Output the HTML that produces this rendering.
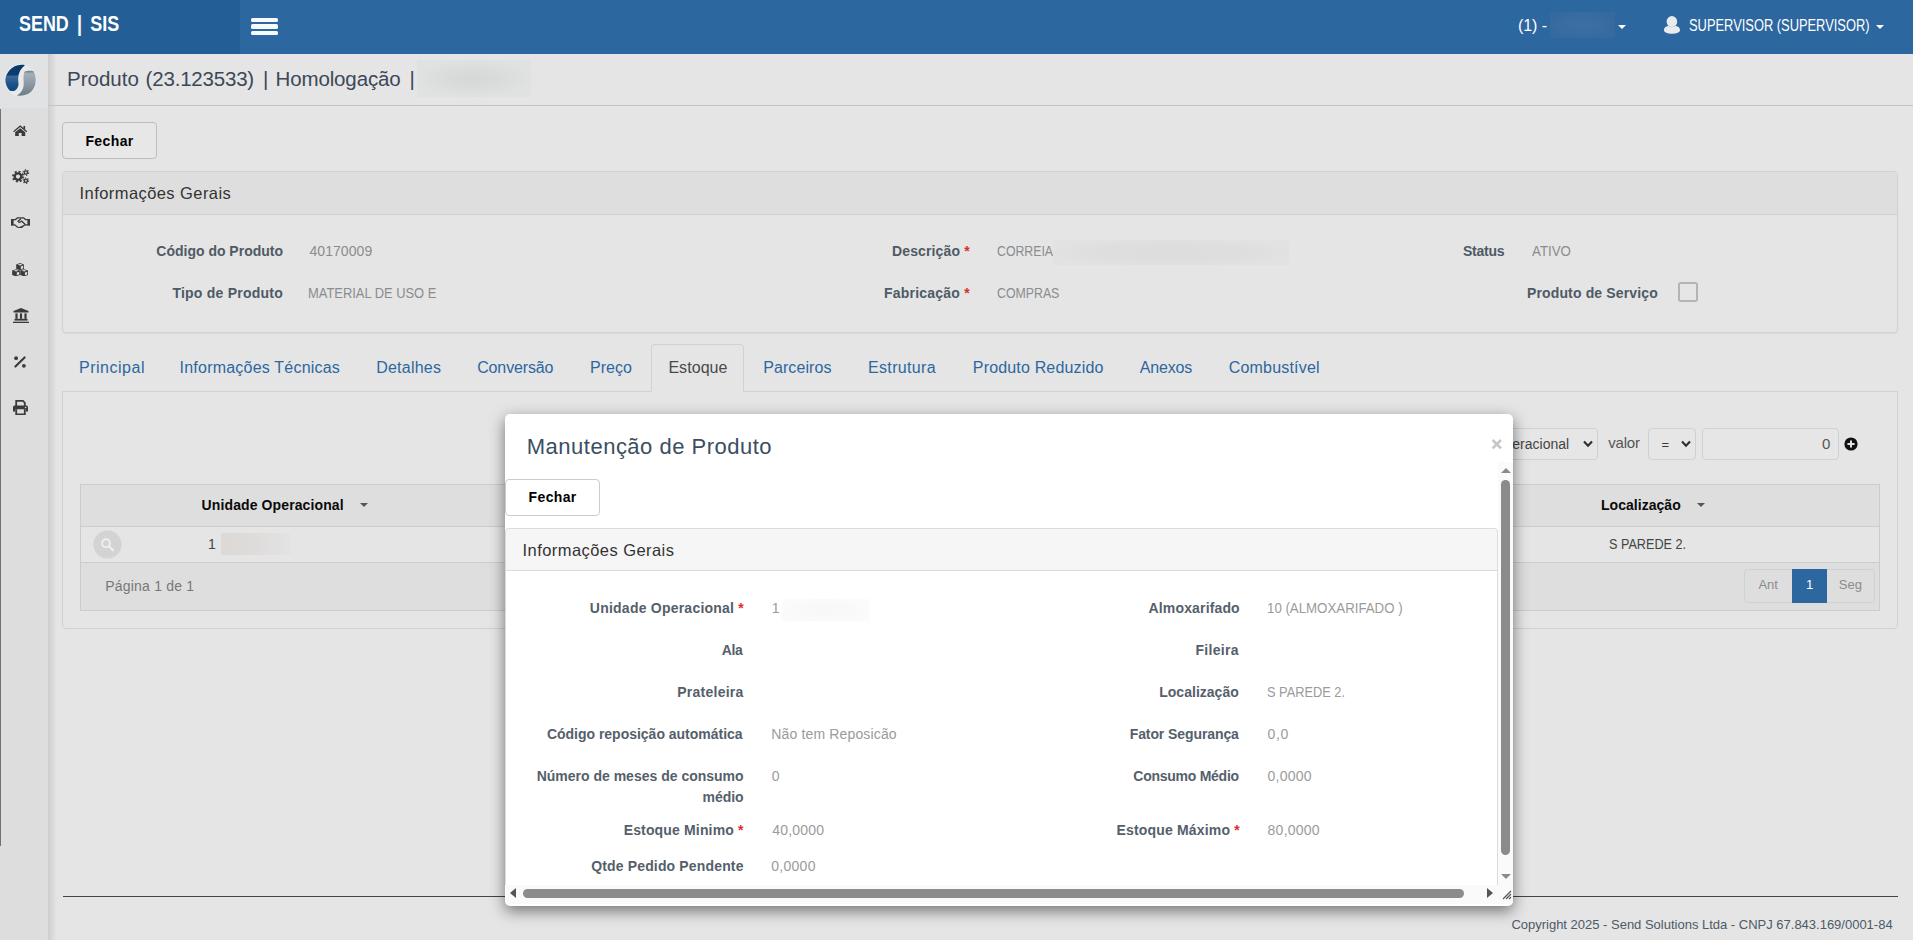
<!DOCTYPE html>
<html lang="pt-BR">
<head>
<meta charset="utf-8">
<title>Produto</title>
<style>
*{box-sizing:border-box;margin:0;padding:0}
html,body{width:1913px;height:940px;overflow:hidden;background:#e5e5e5}
body{position:relative;font-family:"Liberation Sans",sans-serif;font-size:14px;color:#333}
.a{position:absolute}
.t{position:absolute;white-space:nowrap;line-height:20px;height:20px}
.r{text-align:right}
.b{font-weight:bold}
/* header */
#hdr{left:0;top:0;width:1913px;height:54px;background:#2d679f}
#brand{left:0;top:0;width:240px;height:54px;background:#235e96}
.w{color:#fff}
/* sidebar */
#side{left:0;top:54px;width:48px;height:886px;background:#dcdee0}
#sidein{left:0;top:108px;width:42px;height:832px;background:#dddddd}
#sidebar-line{left:0;top:109px;width:1px;height:737px;background:#727272}
#sideshadow{left:48px;top:54px;width:9px;height:886px;background:linear-gradient(to right,rgba(0,0,0,.10),rgba(0,0,0,0))}
/* title */
#titleline{left:48px;top:105px;width:1865px;height:1px;background:#c3c3c3}
.lbl{font-weight:bold;color:#4f5a65;text-align:right}
.val{color:#8a8c8e}.mval{color:#999b9d}.mlbl{color:#55606b}
.red{color:#d9302c}
.btn{border:1px solid #bdbdbd;border-radius:4px}
.panel{border:1px solid #cdd2d4;border-radius:4px}
.tab{color:#2d679f;font-size:16px}
</style>
</head>
<body>
<!-- HEADER -->
<div class="a" id="hdr"></div>
<div class="a" id="brand"></div>
<div class="t w b" id="t-brand" style="transform-origin:0 50%;transform:scaleX(0.8141);word-spacing:4px;left:19.00px;top:12px;font-size:22px;line-height:24px;height:24px">SEND | SIS</div>
<div class="a" style="left:251px;top:17.7px;width:27px;height:4.6px;background:#f7f9fb;border-radius:1.5px"></div>
<div class="a" style="left:251px;top:24.2px;width:27px;height:4.6px;background:#f7f9fb;border-radius:1.5px"></div>
<div class="a" style="left:251px;top:30.7px;width:27px;height:4.6px;background:#f7f9fb;border-radius:1.5px"></div>

<!-- SIDEBAR -->
<div class="a" id="side"></div>
<div class="a" id="sidein"></div>
<div class="a" id="sidebar-line"></div>
<div class="a" id="sideshadow"></div>
<!-- logo -->
<div class="a" style="left:0;top:54px;width:48px;height:54px;background:#e0e2e4"></div>
<svg class="a" style="left:0;top:54px" width="48" height="54" viewBox="0 0 48 54">
<defs>
<linearGradient id="gb" x1="0" y1="0" x2="0" y2="1"><stop offset="0" stop-color="#073869"/><stop offset=".38" stop-color="#0b3d70"/><stop offset=".44" stop-color="#3e6899"/><stop offset=".7" stop-color="#1f558a"/><stop offset="1" stop-color="#0b4777"/></linearGradient>
<linearGradient id="gg" x1="0" y1="0" x2="0" y2="1"><stop offset="0" stop-color="#6a7b87"/><stop offset=".12" stop-color="#a4b0b8"/><stop offset=".5" stop-color="#8e9ba5"/><stop offset="1" stop-color="#6d7d89"/></linearGradient>
</defs>
<ellipse cx="20.5" cy="26.3" rx="16.2" ry="16.2" fill="#e8e9eb"/>
<path d="M24.9 11.2 C22 10.2 16 11 12.8 13.4 C9 16 5.4 21 5.4 26 C5.4 30 7 34 9.6 36.4 C11 37.2 13.5 37.2 14.7 36.7 C17 35.6 18.4 33 18.5 30.6 C18.6 28 18 27 18.2 24 C18.4 19 20.5 14.5 24.9 11.2 Z" fill="url(#gb)"/>
<path d="M24.6 17.5 C26.5 16.6 31 16.4 33.4 17.2 C35 19.5 35.8 23 35.7 26.8 C35.6 31.5 33.6 35.5 30.5 38.3 C27.6 40.8 22 42.2 16.9 41.5 C20 40 22.6 36.4 23.4 33 C24.3 29.4 23.3 26.5 23.5 23 C23.6 21 24 19 24.6 17.5 Z" fill="url(#gg)"/>
</svg>
<!-- sidebar icons -->
<svg class="a" id="ic-home" style="left:13px;top:124.5px" width="14.4" height="11.6" viewBox="0 0 16 12.9"><g fill="#3a3a3a"><path d="M8 .3 L15.8 6.9 L14.9 8 L8 2.2 L1.100 8 L.2 6.900 Z"/><path d="M8 3.500 L13.600 8.2 V12.9 H9.6 V9 H6.4 V12.900 H2.400 V8.200 Z"/><rect x="11.6" y="1" width="1.900" height="3.400"/></g></svg>
<svg class="a" id="ic-cogs" style="left:11.500px;top:169px" width="18" height="15.200" viewBox="0 0 18 15.2"><g fill="none" stroke="#3a3a3a"><circle cx="6" cy="7.6" r="3.300" stroke-width="2.300"/><circle cx="6" cy="7.600" r="5" stroke-width="1.900" stroke-dasharray="1.960 1.960"/><circle cx="13.900" cy="3.500" r="1.600" stroke-width="1.400"/><circle cx="13.900" cy="3.500" r="2.700" stroke-width="1.200" stroke-dasharray="1.2 1.620"/><circle cx="13.900" cy="11.700" r="1.600" stroke-width="1.400"/><circle cx="13.900" cy="11.700" r="2.700" stroke-width="1.200" stroke-dasharray="1.200 1.620"/></g></svg>
<svg class="a" id="ic-hand" style="left:10.500px;top:216.500px" width="19" height="11.600" viewBox="0 0 19 11.6"><g fill="#3a3a3a"><rect x="0" y="2" width="2.600" height="6.700"/><rect x="16.400" y="2" width="2.600" height="6.700"/></g><g fill="none" stroke="#3a3a3a" stroke-width="1.300" stroke-linejoin="round" stroke-linecap="round"><path d="M2.600 2.700 H4.300 L6.500 .8 H12.500 L14.700 2.700 H16.400"/><path d="M2.600 7.800 H3.600 L7.600 10.900 Q9 11.400 10.200 10.600 L14 7.800 H16.400"/><path d="M9.600 2 L7 4.300 Q7.800 5.900 9.600 4.900 L10.600 4.100 L14 7.300"/><path d="M8.600 10.800 L9.400 9.900 M10.600 10.200 L11.300 9.300"/></g></svg>
<svg class="a" id="ic-cubes" style="left:12.2px;top:262.6px" width="16.2" height="13.6" viewBox="0 0 16.2 13.6"><path d="M8.10 0.10 L12.00 1.50 L12.00 5.80 L8.10 7.30 L4.20 5.80 L4.20 1.50 Z" fill="#3a3a3a"/><path d="M8.10 0.85 L10.60 1.65 L8.10 2.50 L5.60 1.65 Z" fill="#dddddd"/><path d="M8.85 3.40 L11.20 2.55 L11.20 5.30 L8.85 6.20 Z" fill="#dddddd"/><path d="M4.05 6.20 L7.95 7.60 L7.95 11.90 L4.05 13.40 L0.15 11.90 L0.15 7.60 Z" fill="#3a3a3a"/><path d="M4.05 6.95 L6.55 7.75 L4.05 8.60 L1.55 7.75 Z" fill="#dddddd"/><path d="M4.80 9.50 L7.15 8.65 L7.15 11.40 L4.80 12.30 Z" fill="#dddddd"/><path d="M12.15 6.20 L16.05 7.60 L16.05 11.90 L12.15 13.40 L8.25 11.90 L8.25 7.60 Z" fill="#3a3a3a"/><path d="M12.15 6.95 L14.65 7.75 L12.15 8.60 L9.65 7.75 Z" fill="#dddddd"/><path d="M12.90 9.50 L15.25 8.65 L15.25 11.40 L12.90 12.30 Z" fill="#dddddd"/></svg>
<svg class="a" id="ic-bank" style="left:12.500px;top:307.500px" width="16" height="15.600" viewBox="0 0 16 15.6"><g fill="#3a3a3a"><path d="M8 0 L15.500 3.100 V4.600 H.5 V3.100 Z"/><rect x="2.400" y="5.400" width="2.200" height="5.400"/><rect x="6.900" y="5.400" width="2.200" height="5.400"/><rect x="11.400" y="5.400" width="2.200" height="5.400"/><rect x="1.500" y="10.800" width="13" height="1.800"/><rect x="0" y="13.700" width="16" height="1.700"/></g></svg>
<svg class="a" id="ic-pct" style="left:14.300px;top:355.500px" width="12" height="12" viewBox="0 0 12 12"><g fill="#3a3a3a"><circle cx="2.100" cy="2.200" r="1.900"/><circle cx="9.900" cy="9.800" r="1.900"/></g><path d="M10.600 1.400 L1.400 10.600" stroke="#3a3a3a" stroke-width="2.100" stroke-linecap="round"/></svg>
<svg class="a" id="ic-print" style="left:13px;top:400px" width="15" height="15.200" viewBox="0 0 15 15.2"><g fill="#3a3a3a"><path d="M2.300 0 H10.300 L12.700 2.400 V6 H10.900 V3 L9.700 1.800 H4.100 V6 H2.300 Z"/><path d="M1.600 5.600 H13.400 Q15 5.600 15 7.200 V11.500 H12.700 V9.200 H2.300 V11.500 H0 V7.200 Q0 5.600 1.600 5.600 Z"/><path d="M2.300 9.200 H4.100 V13.400 H10.900 V9.200 H12.700 V15.200 H2.300 Z"/></g><circle cx="12.600" cy="7.500" r=".8" fill="#dddddd"/></svg>


<!-- TITLE BAR -->
<div class="a" id="titleline"></div>
<div class="t" id="t-title1" style="letter-spacing:0.015px;left:67.00px;top:66px;font-size:20.5px;line-height:26px;height:26px;color:#3c4858">Produto</div><div class="t" id="t-title2" style="letter-spacing:-0.198px;left:145.60px;top:66px;font-size:20.5px;line-height:26px;height:26px;color:#3c4858">(23.123533)</div><div class="t" id="t-title3" style="left:263px;top:66px;font-size:20.5px;line-height:26px;height:26px;color:#3c4858">|</div><div class="t" id="t-title4" style="letter-spacing:-0.144px;left:275.60px;top:66px;font-size:20.5px;line-height:26px;height:26px;color:#3c4858">Homologação</div><div class="t" id="t-title5" style="left:409.5px;top:66px;font-size:20.5px;line-height:26px;height:26px;color:#3c4858">|</div>

<!-- header right -->
<div class="t w" id="t-h1" style="left:1518.00px;top:16px;font-size:16px;letter-spacing:-0.090px">(1) -</div>
<div class="a" id="blur-h" style="left:1550px;top:12px;width:65px;height:26px;background:radial-gradient(ellipse 55% 55% at 50% 50%,#3c6fa3 0%,#396da1 60%,#346a9f 100%)"></div>
<div class="a" style="left:1618px;top:25px;width:0;height:0;border-left:4px solid transparent;border-right:4px solid transparent;border-top:4px solid #fff"></div>
<svg class="a" style="left:1664px;top:16px" width="16" height="18" viewBox="0 0 16 18"><g fill="#e9ebee"><ellipse cx="7.9" cy="5.6" rx="5.3" ry="5.5"/><path d="M0 14.3 C0 11.2 2.600 10.200 4.800 10.100 C6.600 11.600 9.300 11.600 11.100 10.100 C13.400 10.200 16 11.200 16 14.300 C16 16.600 12.300 17.800 8 17.800 C3.700 17.800 0 16.600 0 14.300 Z"/></g></svg>
<div class="t w" id="t-h2" style="transform-origin:0 50%;transform:scaleX(0.8047);left:1689.00px;top:16px;font-size:16px;">SUPERVISOR (SUPERVISOR)</div>
<div class="a" style="left:1876px;top:25px;width:0;height:0;border-left:4px solid transparent;border-right:4px solid transparent;border-top:4px solid #fff"></div>

<!-- title blur -->
<div class="a" id="blur-t" style="left:417px;top:60px;width:114px;height:37px;background:radial-gradient(ellipse 50% 50% at 50% 50%,#d6d7d8 0%,#d9dada 40%,#e0e1e1 100%)"></div>

<!-- main Fechar -->
<div class="a btn" style="left:62px;top:122px;width:95px;height:37px;background:#e7e7e7"></div>
<div class="t b" id="t-fechar1" style="left:85.40px;top:131px;color:#000;letter-spacing:0.396px">Fechar</div>

<!-- Panel Informações Gerais -->
<div class="a panel" style="left:62px;top:171px;width:1836px;height:162px;box-shadow:0 1px 1px rgba(0,0,0,.05)"></div>
<div class="a" style="left:63px;top:172px;width:1834px;height:43px;background:#dedede;border-bottom:1px solid #cdd2d4;border-radius:3px 3px 0 0"></div>
<div class="t" id="t-ig1" style="left:79.60px;top:182.7px;font-size:16.5px;color:#333;letter-spacing:0.423px">Informações Gerais</div>

<div class="t lbl" id="t-l1" style="right:1630.00px;top:241px;letter-spacing:-0.004px">Código do Produto</div>
<div class="t val" id="t-v1" style="left:309.40px;top:241px;letter-spacing:0.084px">40170009</div>
<div class="t lbl" id="t-l2" style="right:1630.00px;top:283px;letter-spacing:0.237px">Tipo de Produto</div>
<div class="t val" id="t-v2" style="transform-origin:0 50%;transform:scaleX(0.9217);left:308.40px;top:283px;">MATERIAL DE USO E</div>

<div class="t lbl" id="t-l3" style="right:943.20px;top:241px;letter-spacing:0.144px">Descrição <span class="red">*</span></div>
<div class="t val" id="t-v3" style="transform-origin:0 50%;transform:scaleX(0.8786);left:997.40px;top:241px;">CORREIA</div>
<div class="a" id="blur-d" style="left:1053px;top:240px;width:236px;height:25px;background:radial-gradient(ellipse 52% 60% at 50% 50%,#dddddd 0%,#dedede 60%,#e2e2e2 100%)"></div>
<div class="t lbl" id="t-l4" style="right:943.20px;top:283px;letter-spacing:0.206px">Fabricação <span class="red">*</span></div>
<div class="t val" id="t-v4" style="transform-origin:0 50%;transform:scaleX(0.8805);left:997.40px;top:283px;">COMPRAS</div>

<div class="t lbl" id="t-l5" style="right:408.60px;top:241px;letter-spacing:-0.216px">Status</div>
<div class="t val" id="t-v5" style="transform-origin:0 50%;transform:scaleX(0.9500);left:1531.80px;top:241px;">ATIVO</div>
<div class="t lbl" id="t-l6" style="right:255.00px;top:283px;letter-spacing:0.152px">Produto de Serviço</div>
<div class="a" style="left:1678px;top:282px;width:20px;height:20px;border:2px solid #b4b4b4;border-radius:3px;background:#e6e6e6"></div>

<!-- Tabs -->
<div class="a" style="left:62px;top:391px;width:1836px;height:238px;border:1px solid #cdd2d4;border-radius:0 0 4px 4px"></div>
<div class="a" style="left:651px;top:344px;width:93px;height:48px;border:1px solid #cdd2d4;border-bottom:1px solid #e5e5e5;border-radius:4px 4px 0 0;background:#e5e5e5"></div>
<div class="t tab" id="t-tab1" style="left:79.00px;top:358px;letter-spacing:0.510px">Principal</div>
<div class="t tab" id="t-tab2" style="left:179.60px;top:358px;letter-spacing:0.211px">Informações Técnicas</div>
<div class="t tab" id="t-tab3" style="left:376.20px;top:358px;letter-spacing:0.224px">Detalhes</div>
<div class="t tab" id="t-tab4" style="left:477.20px;top:358px;letter-spacing:-0.135px">Conversão</div>
<div class="t tab" id="t-tab5" style="left:590.00px;top:358px;letter-spacing:0.000px">Preço</div>
<div class="t tab" id="t-tab6" style="left:668.40px;top:358px;color:#4a4a4a;letter-spacing:0.060px">Estoque</div>
<div class="t tab" id="t-tab7" style="left:763.20px;top:358px;letter-spacing:0.090px">Parceiros</div>
<div class="t tab" id="t-tab8" style="left:868.00px;top:358px;letter-spacing:0.338px">Estrutura</div>
<div class="t tab" id="t-tab9" style="left:972.80px;top:358px;letter-spacing:0.168px">Produto Reduzido</div>
<div class="t tab" id="t-tab10" style="left:1139.80px;top:358px;letter-spacing:-0.180px">Anexos</div>
<div class="t tab" id="t-tab11" style="left:1228.80px;top:358px;letter-spacing:0.180px">Combustível</div>

<!-- filter row -->
<div class="a" style="left:1440px;top:428px;width:158px;height:32px;border:1px solid #cdd2d4;border-radius:4px;background:#e6e6e6"></div>
<div class="t" id="t-sel1" style="left:1512.3px;top:434px;font-size:14px;color:#444;letter-spacing:0px">eracional</div>
<svg class="a" style="left:1583px;top:440px" width="10" height="8" viewBox="0 0 10 8"><path d="M1 1.5 L5 5.8 L9 1.5" fill="none" stroke="#2e2e2e" stroke-width="2.1"/></svg>
<div class="t" id="t-valor" style="left:1608.20px;top:433px;font-size:15px;color:#555;letter-spacing:-0.180px">valor</div>
<div class="a" style="left:1648px;top:428px;width:48px;height:32px;border:1px solid #cdd2d4;border-radius:4px;background:#e6e6e6"></div>
<div class="t" id="t-eq" style="left:1661.5px;top:435px;font-size:13px;color:#3a3a3a">=</div>
<svg class="a" style="left:1681px;top:440px" width="10" height="8" viewBox="0 0 10 8"><path d="M1 1.5 L5 5.8 L9 1.5" fill="none" stroke="#2e2e2e" stroke-width="2.1"/></svg>
<div class="a" style="left:1702px;top:428px;width:137px;height:32px;border:1px solid #cdd2d4;border-radius:4px;background:#e6e6e6"></div>
<div class="t" id="t-zero" style="left:1822px;top:434px;font-size:15px;color:#555">0</div>
<svg class="a" style="left:1844px;top:437px" width="14" height="14" viewBox="0 0 14 14"><circle cx="7" cy="7" r="6.6" fill="#111"/><path d="M7 3.4V10.6M3.4 7H10.6" stroke="#e5e5e5" stroke-width="2"/></svg>

<!-- table -->
<div class="a" style="left:80px;top:484px;width:1800px;height:127px;border:1px solid #c9cdcf;background:#e5e5e5"></div>
<div class="a" style="left:81px;top:485px;width:1798px;height:42px;background:#dedede;border-bottom:1px solid #c9cdcf"></div>
<div class="a" style="left:81px;top:562px;width:1798px;height:48px;background:#dedede;border-top:1px solid #c9cdcf"></div>
<div class="t b" id="t-th1" style="left:201.60px;top:495px;color:#0a0a0a;letter-spacing:0.110px">Unidade Operacional</div>
<div class="a" style="left:360px;top:503px;width:0;height:0;border-left:4px solid transparent;border-right:4px solid transparent;border-top:4px solid #555"></div>
<div class="t b" id="t-th2" style="left:1601.00px;top:495px;color:#0a0a0a;letter-spacing:0.036px">Localização</div>
<div class="a" style="left:1697px;top:503px;width:0;height:0;border-left:4px solid transparent;border-right:4px solid transparent;border-top:4px solid #555"></div>
<svg class="a" style="left:93px;top:529.500px" width="29" height="29" viewBox="0 0 29 29"><circle cx="14.500" cy="14.500" r="14" fill="#d3d3d3"/><circle cx="13" cy="13.200" r="3.900" fill="none" stroke="#edf0f2" stroke-width="1.900"/><path d="M15.900 16.200 L20 20.300" stroke="#edf0f2" stroke-width="2.300" stroke-linecap="round"/></svg>
<div class="t" id="t-td1" style="left:208px;top:534px;color:#444">1</div>
<div class="a" id="blur-r" style="left:221px;top:533px;width:70px;height:22px;background:linear-gradient(to right,#dcd9d6 0%,#dedcda 45%,#e1e0e0 80%,#e3e3e3 100%)"></div>
<div class="t" id="t-td2" style="transform-origin:0 50%;transform:scaleX(0.9025);left:1609.40px;top:534px;color:#444;">S PAREDE 2.</div>
<div class="t" id="t-pag" style="left:105.20px;top:576px;color:#777;letter-spacing:0.213px">Página 1 de 1</div>
<div class="a" style="left:1744px;top:569px;width:131px;height:34px;border:1px solid #cdd2d4;border-radius:4px;background:#dedede"></div>
<div class="a" style="left:1792px;top:569px;width:35px;height:34px;background:#2d679f"></div>
<div class="t" id="t-ant" style="left:1758.40px;top:575px;font-size:13px;color:#8c8c8c">Ant</div>
<div class="t w" id="t-p1" style="left:1806px;top:575px;font-size:13px">1</div>
<div class="t" id="t-seg" style="left:1838.80px;top:575px;font-size:13px;color:#8c8c8c">Seg</div>

<!-- footer -->
<div class="a" style="left:63px;top:896px;width:1835px;height:1px;background:#444"></div>
<div class="t" id="t-copy" style="left:1511.40px;top:915px;font-size:13px;color:#4b5a69;letter-spacing:-0.006px">Copyright 2025 - Send Solutions Ltda - CNPJ 67.843.169/0001-84</div>
<!-- MODAL -->
<div class="a" id="modal" style="left:505px;top:414px;width:1008px;height:492px;background:#fff;border-radius:5px;box-shadow:0 5px 15px rgba(0,0,0,.5)"></div>
<div class="t" id="t-mtitle" style="left:526.80px;top:432px;font-size:22px;line-height:30px;height:30px;color:#3a4e62;letter-spacing:0.495px">Manutenção de Produto</div>
<svg class="a" style="left:1491px;top:438px" width="12" height="12" viewBox="0 0 12 12"><path d="M1.6 2L10 10.400M10 2L1.600 10.400" stroke="#c6c6c6" stroke-width="2.6"/></svg>
<!-- scrollbars -->
<div class="a" style="left:1498px;top:462px;width:15px;height:423px;background:#fafafa"></div>
<div class="a" style="left:506px;top:885px;width:1007px;height:19px;background:#fafafa;border-radius:0 0 4px 4px"></div>
<div class="a" style="left:1501px;top:480px;width:9px;height:375px;background:#8b8b8b;border-radius:5px"></div>
<div class="a" style="left:523px;top:889px;width:941px;height:9px;background:#8b8b8b;border-radius:5px"></div>
<div class="a" style="left:1501px;top:468px;width:0;height:0;border-left:5px solid transparent;border-right:5px solid transparent;border-bottom:5px solid #8b8b8b"></div>
<div class="a" style="left:1501px;top:874px;width:0;height:0;border-left:5px solid transparent;border-right:5px solid transparent;border-top:5px solid #8b8b8b"></div>
<div class="a" style="left:510px;top:888px;width:0;height:0;border-top:5px solid transparent;border-bottom:5px solid transparent;border-right:6px solid #555"></div>
<div class="a" style="left:1487px;top:888px;width:0;height:0;border-top:5px solid transparent;border-bottom:5px solid transparent;border-left:6px solid #555"></div>
<svg class="a" style="left:1502px;top:890px" width="10" height="10" viewBox="0 0 10 10"><path d="M9 1L1 9M9 4L4 9M9 7L7 9" stroke="#555" stroke-width="1.2"/></svg>
<!-- modal content -->
<div class="a btn" style="left:505px;top:479px;width:95px;height:37px;background:#fff;border-color:#ccc"></div>
<div class="t b" id="t-fechar2" style="left:528.60px;top:487px;color:#000;letter-spacing:0.360px">Fechar</div>
<div class="a" style="left:505px;top:528px;width:993px;height:357px;border:1px solid #d5dde3;border-bottom:none;border-radius:4px 4px 0 0"></div>
<div class="a" style="left:506px;top:529px;width:991px;height:42px;background:#f6f6f6;border-bottom:1px solid #d5dde3;border-radius:3px 3px 0 0"></div>
<div class="t" id="t-ig2" style="left:522.60px;top:540px;font-size:16.5px;color:#333;letter-spacing:0.435px">Informações Gerais</div>

<div class="t lbl mlbl" id="t-m1" style="right:1169.00px;top:598px;letter-spacing:0.226px">Unidade Operacional <span class="red">*</span></div>
<div class="t val mval" id="t-mv1" style="left:771.7px;top:598px">1</div>
<div class="a" id="blur-m" style="left:782px;top:599px;width:87px;height:22px;background:radial-gradient(ellipse 50% 55% at 50% 50%,#f8f8f8 0%,#f9f9f9 60%,#fbfbfb 100%)"></div>
<div class="t lbl mlbl" id="t-m2" style="right:1170.50px;top:640px;letter-spacing:-0.35px">Ala</div>
<div class="t lbl mlbl" id="t-m3" style="right:1169.40px;top:682px;letter-spacing:0.260px">Prateleira</div>
<div class="t lbl mlbl" id="t-m4" style="right:1170.40px;top:724px;letter-spacing:-0.012px">Código reposição automática</div>
<div class="t val mval" id="t-mv4" style="left:771.20px;top:724px;letter-spacing:0.157px">Não tem Reposicão</div>
<div class="t lbl mlbl" id="t-m5" style="right:1169.40px;top:766px;letter-spacing:-0.000px">Número de meses de consumo</div>
<div class="t lbl mlbl" id="t-m5b" style="right:1169.40px;top:787px;letter-spacing:-0.045px">médio</div>
<div class="t val mval" id="t-mv5" style="left:771.7px;top:766px">0</div>
<div class="t lbl mlbl" id="t-m6" style="right:1169.40px;top:820px;letter-spacing:0.156px">Estoque Minimo <span class="red">*</span></div>
<div class="t val mval" id="t-mv6" style="left:772.20px;top:820px;letter-spacing:0.210px">40,0000</div>
<div class="t lbl mlbl" id="t-m7" style="right:1169.40px;top:856px;letter-spacing:0.152px">Qtde Pedido Pendente</div>
<div class="t val mval" id="t-mv7" style="left:771.20px;top:856px;letter-spacing:0.288px">0,0000</div>

<div class="t lbl mlbl" id="t-n1" style="right:673.20px;top:598px;letter-spacing:0.149px">Almoxarifado</div>
<div class="t val mval" id="t-nv1" style="transform-origin:0 50%;transform:scaleX(0.9473);left:1266.60px;top:598px;">10 (ALMOXARIFADO )</div>
<div class="t lbl mlbl" id="t-n2" style="right:674.20px;top:640px;letter-spacing:0.300px">Fileira</div>
<div class="t lbl mlbl" id="t-n3" style="right:674.20px;top:682px;letter-spacing:0.018px">Localização</div>
<div class="t val mval" id="t-nv3" style="transform-origin:0 50%;transform:scaleX(0.9147);left:1266.60px;top:682px;">S PAREDE 2.</div>
<div class="t lbl mlbl" id="t-n4" style="right:674.20px;top:724px;letter-spacing:-0.090px">Fator Segurança</div>
<div class="t val mval" id="t-nv4" style="left:1267.60px;top:724px;letter-spacing:0.630px">0,0</div>
<div class="t lbl mlbl" id="t-n5" style="right:674.20px;top:766px;letter-spacing:-0.258px">Consumo Médio</div>
<div class="t val mval" id="t-nv5" style="left:1267.60px;top:766px;letter-spacing:0.216px">0,0000</div>
<div class="t lbl mlbl" id="t-n6" style="right:673.20px;top:820px;letter-spacing:0.168px">Estoque Máximo <span class="red">*</span></div>
<div class="t val mval" id="t-nv6" style="left:1267.60px;top:820px;letter-spacing:0.240px">80,0000</div>

</body>
</html>
